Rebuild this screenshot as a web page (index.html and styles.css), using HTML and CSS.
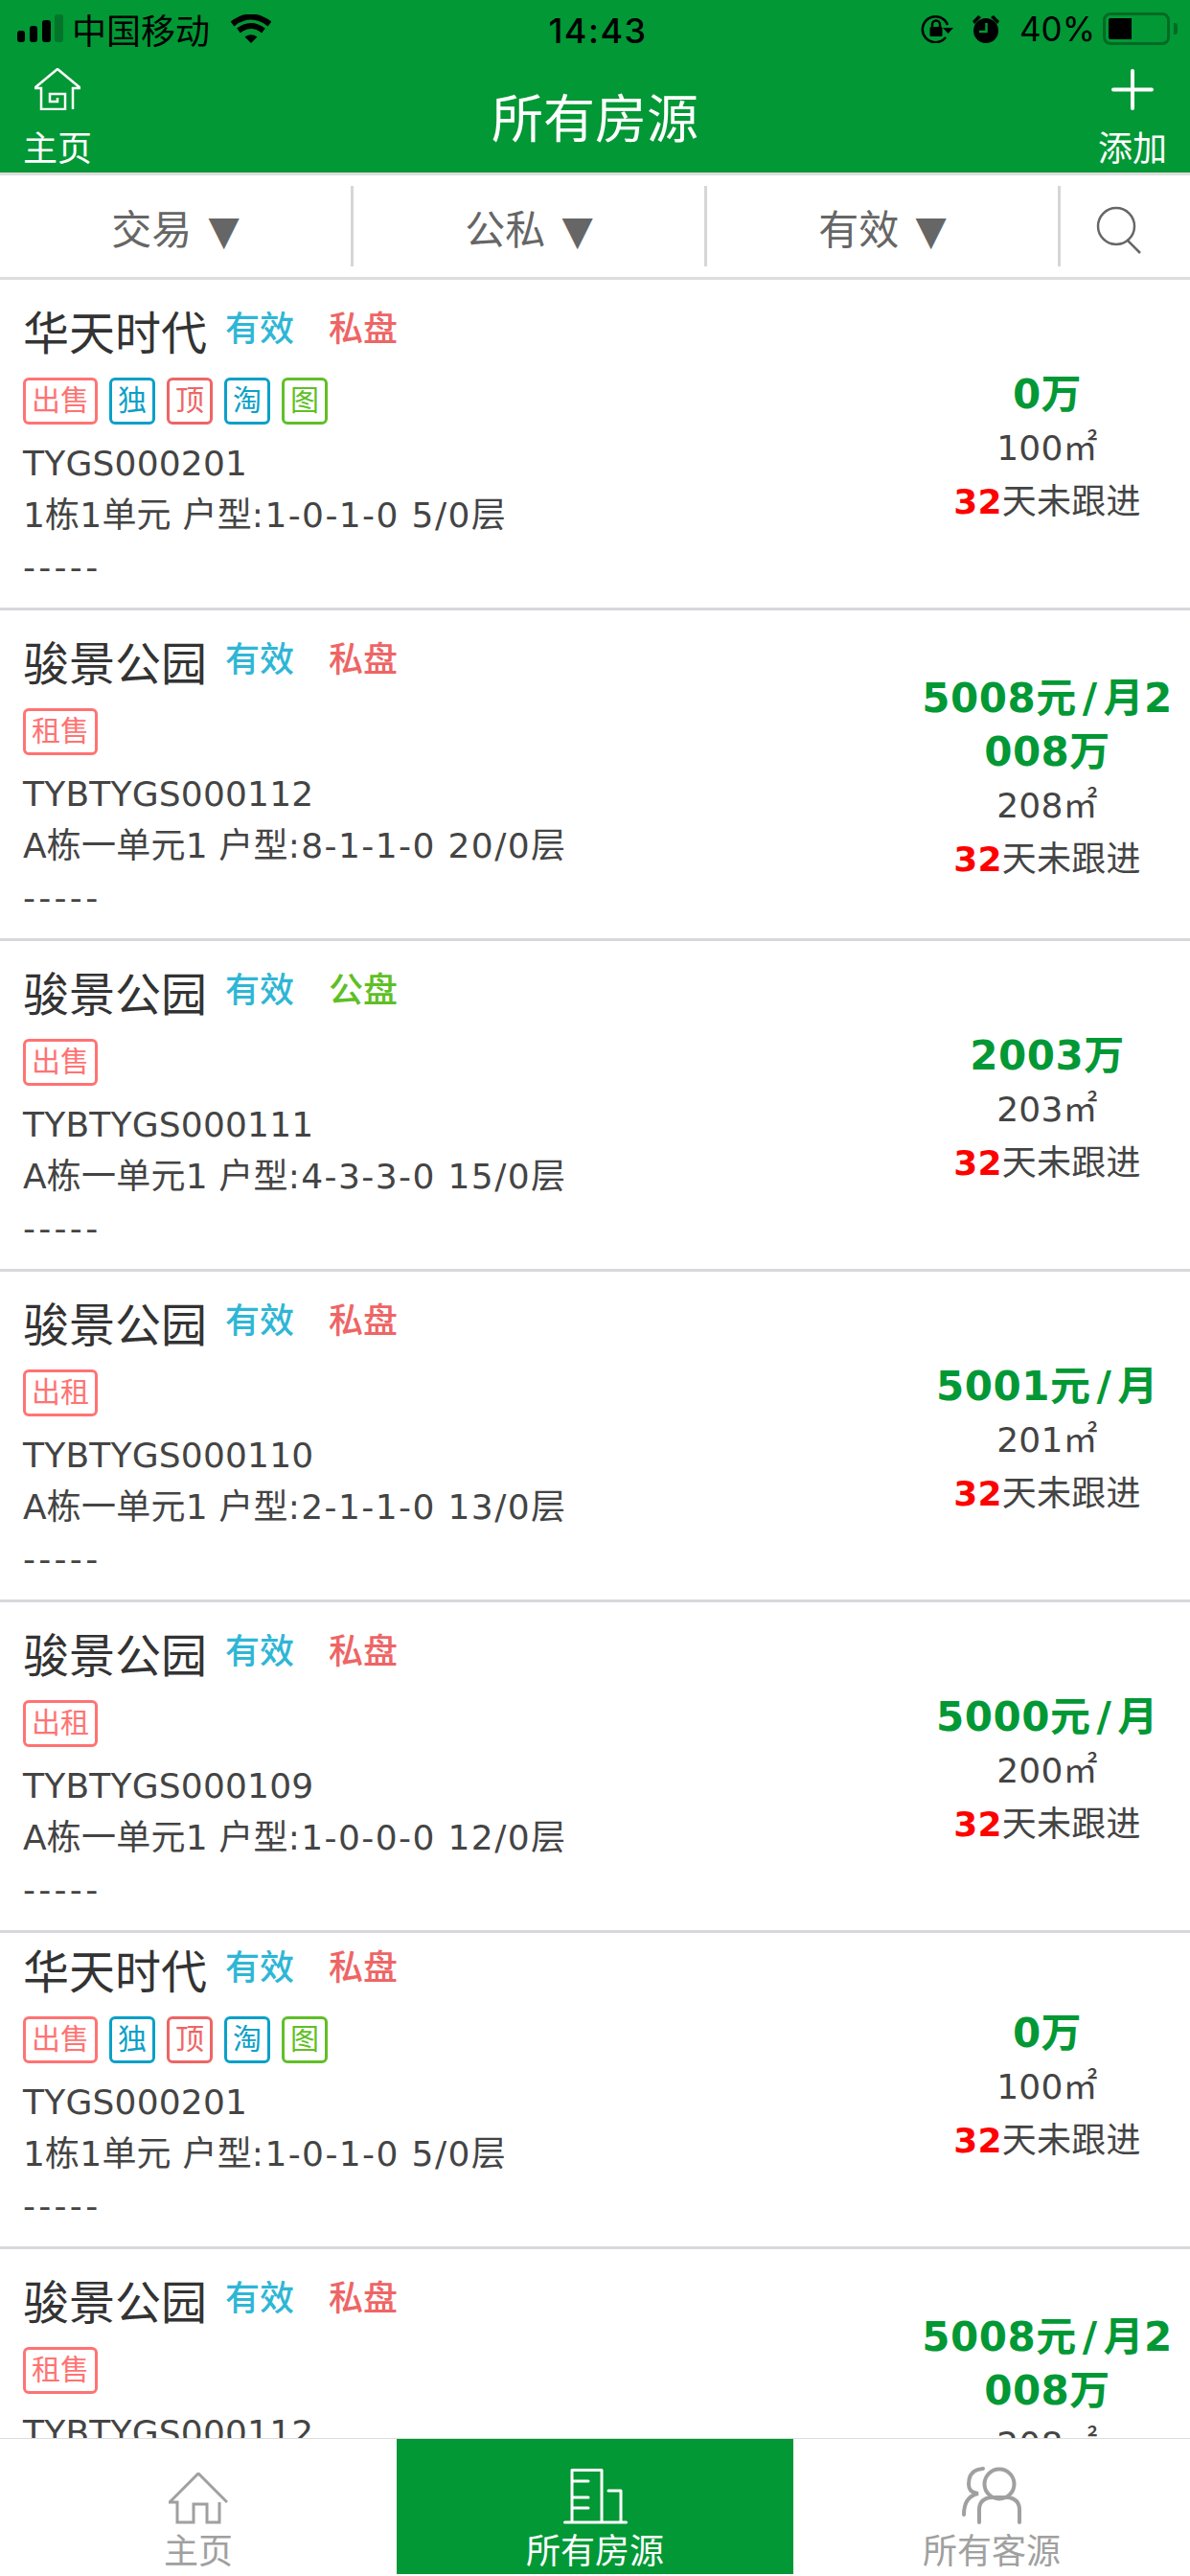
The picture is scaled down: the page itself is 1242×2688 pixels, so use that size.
FILE: index.html
```html
<!DOCTYPE html>
<html lang="zh">
<head>
<meta charset="utf-8">
<title>所有房源</title>
<link rel="stylesheet" href="styles.css">
</head>
<body>
<div class="app">
  <div class="top">
    <div class="status">
      <div class="status-left">
        <svg class="signal" viewBox="0 0 48 30" width="48" height="30"><rect x="0" y="17" width="8" height="12" rx="3"/><rect x="13" y="12" width="8" height="17" rx="3"/><rect x="26" y="6" width="9" height="23" rx="3"/><rect class="signal-off" x="39" y="0" width="9" height="29" rx="3"/></svg>
        <span class="carrier">中国移动</span>
        <svg class="wifi" viewBox="0 0 42 30" width="42" height="30"><path d="M21 30 L14.500 23.500 Q21 19 27.500 23.500Z"/><path d="M8 17 Q21 7 34 17" fill="none" stroke="#000" stroke-width="6"/><path d="M1.500 10 Q21 -5 40.500 10" fill="none" stroke="#000" stroke-width="6"/></svg>
      </div>
      <div class="clock">14:43</div>
      <div class="status-right">
        <svg class="lock" viewBox="0 0 34 30" width="34" height="30"><path d="M26 24 A13.500 13.500 0 1 1 28 11" fill="none" stroke="#000" stroke-width="2.500"/><path d="M23 14 L34 14 L28.500 20Z"/><rect x="9.500" y="13" width="13" height="10" rx="1.500"/><path d="M12 14 V10.500 A4 4 0 0 1 20 10.500 V14" fill="none" stroke="#000" stroke-width="2.500"/></svg>
        <svg class="alarm" viewBox="0 0 28 29" width="28" height="29"><circle cx="14" cy="16" r="13"/><path d="M0 6 L6 0 L9 2 L2 9Z M28 6 L22 0 L19 2 L26 9Z"/><path d="M14.500 8 V17 H7" fill="none" stroke="#029835" stroke-width="2.500"/></svg>
        <span class="pct">40%</span>
        <div class="battery"><div class="battery-fill"></div></div>
        <div class="battery-tip"></div>
      </div>
    </div>
    <div class="nav">
      <div class="nav-btn">
        <svg viewBox="0 0 48 44" width="48" height="44" class="nav-icon"><path d="M0 21 H7 V43 H32 V27 H16 V35 H24 V31 M48 21 H40 V43 M0 21 L24 1 L48 21" fill="none" stroke="#fff" stroke-width="2.500"/></svg>
        <span>主页</span>
      </div>
      <div class="nav-title">所有房源</div>
      <div class="nav-btn">
        <svg viewBox="0 0 48 44" width="48" height="44" class="nav-icon"><path d="M24 3 V42 M4 22.500 H44" fill="none" stroke="#fff" stroke-width="4" stroke-linecap="round"/></svg>
        <span>添加</span>
      </div>
    </div>
  </div>
  <div class="filters">
    <div class="filter">交易 ▼</div>
    <div class="filter">公私 ▼</div>
    <div class="filter">有效 ▼</div>
    <div class="filter-search">
      <svg viewBox="0 0 48 50" width="48" height="50"><circle cx="21" cy="21" r="19" fill="none" stroke="#666" stroke-width="2.500"/><path d="M33 36 L46 49" stroke="#666" stroke-width="2.500"/></svg>
    </div>
  </div>
  <div class="list">
    <div class="row">
      <div class="info">
        <div class="head"><span class="name">华天时代</span><span class="st st-blue">有效</span><span class="st st-red">私盘</span></div>
        <div class="tags"><span class="tag tag-pink">出售</span><span class="tag tag-one tag-blue">独</span><span class="tag tag-one tag-red">顶</span><span class="tag tag-one tag-blue">淘</span><span class="tag tag-one tag-green">图</span></div>
        <div class="line">TYGS000201</div>
        <div class="line">1栋1单元 户型<span class="wide">:1-0-1-0 5/0</span>层</div>
        <div class="line dash">-----</div>
      </div>
      <div class="side"><div class="price">0万</div><div class="line">100㎡</div><div class="line"><b class="days">32</b>天未跟进</div></div>
    </div>
    <div class="row">
      <div class="info">
        <div class="head"><span class="name">骏景公园</span><span class="st st-blue">有效</span><span class="st st-red">私盘</span></div>
        <div class="tags"><span class="tag tag-pink">租售</span></div>
        <div class="line">TYBTYGS000112</div>
        <div class="line">A栋一单元1 户型<span class="wide">:8-1-1-0 20/0</span>层</div>
        <div class="line dash">-----</div>
      </div>
      <div class="side"><div class="price">5008元<span class="slash">/</span>月2008万</div><div class="line">208㎡</div><div class="line"><b class="days">32</b>天未跟进</div></div>
    </div>
    <div class="row">
      <div class="info">
        <div class="head"><span class="name">骏景公园</span><span class="st st-blue">有效</span><span class="st st-green">公盘</span></div>
        <div class="tags"><span class="tag tag-pink">出售</span></div>
        <div class="line">TYBTYGS000111</div>
        <div class="line">A栋一单元1 户型<span class="wide">:4-3-3-0 15/0</span>层</div>
        <div class="line dash">-----</div>
      </div>
      <div class="side"><div class="price">2003万</div><div class="line">203㎡</div><div class="line"><b class="days">32</b>天未跟进</div></div>
    </div>
    <div class="row">
      <div class="info">
        <div class="head"><span class="name">骏景公园</span><span class="st st-blue">有效</span><span class="st st-red">私盘</span></div>
        <div class="tags"><span class="tag tag-pink">出租</span></div>
        <div class="line">TYBTYGS000110</div>
        <div class="line">A栋一单元1 户型<span class="wide">:2-1-1-0 13/0</span>层</div>
        <div class="line dash">-----</div>
      </div>
      <div class="side"><div class="price">5001元<span class="slash">/</span>月</div><div class="line">201㎡</div><div class="line"><b class="days">32</b>天未跟进</div></div>
    </div>
    <div class="row">
      <div class="info">
        <div class="head"><span class="name">骏景公园</span><span class="st st-blue">有效</span><span class="st st-red">私盘</span></div>
        <div class="tags"><span class="tag tag-pink">出租</span></div>
        <div class="line">TYBTYGS000109</div>
        <div class="line">A栋一单元1 户型<span class="wide">:1-0-0-0 12/0</span>层</div>
        <div class="line dash">-----</div>
      </div>
      <div class="side"><div class="price">5000元<span class="slash">/</span>月</div><div class="line">200㎡</div><div class="line"><b class="days">32</b>天未跟进</div></div>
    </div>
    <div class="row row-tight">
      <div class="info">
        <div class="head"><span class="name">华天时代</span><span class="st st-blue">有效</span><span class="st st-red">私盘</span></div>
        <div class="tags"><span class="tag tag-pink">出售</span><span class="tag tag-one tag-blue">独</span><span class="tag tag-one tag-red">顶</span><span class="tag tag-one tag-blue">淘</span><span class="tag tag-one tag-green">图</span></div>
        <div class="line">TYGS000201</div>
        <div class="line">1栋1单元 户型<span class="wide">:1-0-1-0 5/0</span>层</div>
        <div class="line dash">-----</div>
      </div>
      <div class="side"><div class="price">0万</div><div class="line">100㎡</div><div class="line"><b class="days">32</b>天未跟进</div></div>
    </div>
    <div class="row">
      <div class="info">
        <div class="head"><span class="name">骏景公园</span><span class="st st-blue">有效</span><span class="st st-red">私盘</span></div>
        <div class="tags"><span class="tag tag-pink">租售</span></div>
        <div class="line">TYBTYGS000112</div>
        <div class="line">A栋一单元1 户型<span class="wide">:8-1-1-0 20/0</span>层</div>
        <div class="line dash">-----</div>
      </div>
      <div class="side"><div class="price">5008元<span class="slash">/</span>月2008万</div><div class="line">208㎡</div><div class="line"><b class="days">32</b>天未跟进</div></div>
    </div>
  </div>
  <div class="tabs">
    <div class="tab">
      <svg viewBox="0 0 62 54" width="62" height="54"><path d="M0 31 H9 V52 H26 V33 H40 V52 H53 V31 M1 31 L31 1 L61 31" fill="none" stroke="#a0a0a0" stroke-width="3"/></svg>
      <span>主页</span>
    </div>
    <div class="tab tab-on">
      <svg viewBox="0 0 67 58" width="67" height="58"><path d="M9 56 V1.500 H40 V56 M47 23 H60 V56 M9 13 H26 M9 30 H26 M9 41 H26 M1.500 56 H65.500" fill="none" stroke="#fff" stroke-width="3" stroke-linecap="round" stroke-linejoin="round"/></svg>
      <span>所有房源</span>
    </div>
    <div class="tab">
      <svg viewBox="0 0 62 60" width="62" height="60"><circle cx="39" cy="18" r="15.500" fill="none" stroke="#a0a0a0" stroke-width="4"/><path d="M18 58 V45 Q18 33 31 32 H47 Q60 33 60 45 V58 M22 2 Q7 3 7 18 Q7 27 17 28 Q2 31 2 50" fill="none" stroke="#a0a0a0" stroke-width="4" stroke-linecap="round"/></svg>
      <span>所有客源</span>
    </div>
  </div>
</div>
</body>
</html>
```

FILE: styles.css
```css
* { box-sizing: border-box; }
html, body { margin: 0; padding: 0; background: #fff; }
body { font-family: "DejaVu Sans", "Noto Sans CJK SC", sans-serif; color: #333; }
.app { width: 1242px; height: 2688px; display: flex; flex-direction: column; overflow: hidden; }

.top { background: #029835; height: 180px; flex: none; display: flex; flex-direction: column; }
.status { height: 60px; padding: 0 13px 0 18px; display: flex; align-items: center; justify-content: space-between; color: #000; position: relative; flex: none; }
.status-left, .status-right { display: flex; align-items: center; }
.signal-off { fill: #02752a; }
.carrier { font-family: "Noto Sans CJK SC", sans-serif; font-size: 36px; margin: 0 22px 0 9px; line-height: 40px; }
.clock { position: absolute; left: 6px; right: 0; top: 7px; text-align: center; font-family: Inter, sans-serif; font-size: 36px; font-weight: 500; line-height: 50px; letter-spacing: 1.5px; }
.alarm { margin-left: 20px; }
.pct { font-family: Inter, sans-serif; font-size: 35px; margin: 0 8px 0 21px; }
.battery { width: 70px; height: 34px; border: 3px solid #036a25; border-radius: 8px; padding: 3px; }
.battery-fill { width: 24px; height: 100%; background: #000; border-radius: 2px 0 0 2px; }
.battery-tip { width: 4px; height: 12px; background: #036a25; border-radius: 0 3px 3px 0; margin-left: 4px; }

.nav { flex: 1; display: flex; justify-content: space-between; align-items: flex-start; padding: 11px 24px 0; color: #fff; font-family: "Noto Sans CJK SC", sans-serif; }
.nav-btn { width: 72px; display: flex; flex-direction: column; align-items: center; font-size: 36px; line-height: 46px; }
.nav-icon { display: block; margin-bottom: 14px; }
.nav-title { font-size: 54px; line-height: 76px; margin-top: 12px; }

.filters { height: 112px; flex: none; border-top: 3px solid #ddd; border-bottom: 3px solid #ddd; display: grid; grid-template-columns: 369px 369px 369px 1fr; align-items: center; background: #fff; }
.filter { height: 84px; border-right: 3px solid #d6d6d6; display: flex; align-items: center; justify-content: center; font-size: 42px; color: #666; word-spacing: 4px; }
.filter-search { display: flex; justify-content: center; padding: 8px 14px 0 0; }

.list { flex: 1; overflow: hidden; min-height: 0; }
.row { border-bottom: 3px solid #d8d8dc; padding: 25px 14px 15px 24px; display: flex; align-items: center; justify-content: space-between; }
.row-tight { padding-top: 10px; }
.info { flex: 1; min-width: 0; }
.head { height: 54px; display: flex; align-items: center; }
.name { font-size: 48px; margin-right: 19px; color: #333; }
.st { font-family: "Noto Sans CJK SC", sans-serif; font-size: 36px; font-weight: 500; margin-right: 36px; padding-bottom: 8px; }
.st-blue { color: #2fb6d5; }
.st-red { color: #ee6565; }
.st-green { color: #5fbf26; }
.tags { display: flex; gap: 12px; margin-top: 23px; margin-bottom: 14px; }
.tag { height: 49px; padding: 0 6px; border: 3px solid; border-radius: 6px; font-size: 30px; line-height: 42px; text-align: center; white-space: nowrap; }
.tag-one { width: 48px; padding: 0; }
.tag-pink { color: #ff7373; }
.tag-red { color: #ee6565; }
.tag-blue { color: #0aa0c8; }
.tag-green { color: #5fbf26; }
.line { font-size: 36px; line-height: 54px; color: #444; white-space: nowrap; letter-spacing: .2px; }
.wide { letter-spacing: 1.4px; }
.dash { letter-spacing: 3.3px; }
.side { width: 270px; flex: none; text-align: center; }
.side .line { line-height: 56px; }
.price { font-size: 42px; font-weight: 700; color: #029835; line-height: 56px; word-break: break-all; letter-spacing: .5px; }
.slash { padding: 0 6px; }
.days { color: #f00; }

.tabs { height: 144px; flex: none; border-top: 1px solid #ddd; padding-bottom: 2px; display: grid; grid-template-columns: repeat(3, 1fr); background: #fff; }
.tab { display: flex; flex-direction: column; align-items: center; justify-content: flex-end; font-family: "Noto Sans CJK SC", sans-serif; font-size: 36px; line-height: 50px; color: #a0a0a0; padding-bottom: 2px; }
.tab-on { background: #029835; color: #fff; }
```
